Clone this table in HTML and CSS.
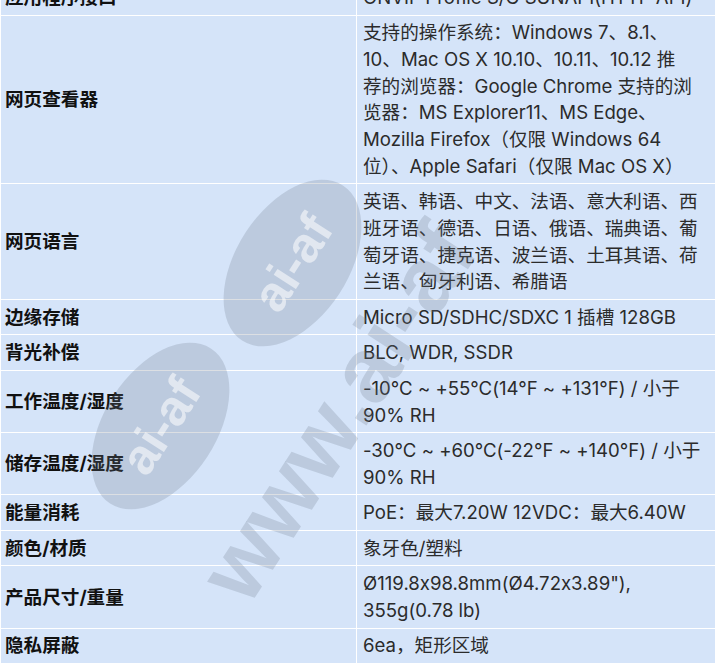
FILE: index.html
```html
<!DOCTYPE html>
<html lang="zh-CN">
<head>
    <meta charset="UTF-8">
    <meta name="viewport" content="width=device-width, initial-scale=1.0">
    <title>规格</title>
    <link rel="stylesheet" href="styles.css">
</head>
<body>
    <div class="page">
        <table class="spec-table">
            <tbody>
                <tr>
                    <th>应用程序接口</th>
                    <td>ONVIF Profile S/G SUNAPI(HTTP API)</td>
                </tr>
                <tr>
                    <th>网页查看器</th>
                    <td>支持的操作系统：Windows 7、8.1、<br>10、Mac OS X 10.10、10.11、10.12 推<br>荐的浏览器：Google Chrome 支持的浏<br>览器：MS Explorer11、MS Edge、<br>Mozilla Firefox（仅限 Windows 64<br>位）、Apple Safari（仅限 Mac OS X）</td>
                </tr>
                <tr>
                    <th>网页语言</th>
                    <td>英语、韩语、中文、法语、意大利语、西<br>班牙语、德语、日语、俄语、瑞典语、葡<br>萄牙语、捷克语、波兰语、土耳其语、荷<br>兰语、匈牙利语、希腊语</td>
                </tr>
                <tr>
                    <th>边缘存储</th>
                    <td>Micro SD/SDHC/SDXC 1 插槽 128GB</td>
                </tr>
                <tr>
                    <th>背光补偿</th>
                    <td>BLC, WDR, SSDR</td>
                </tr>
                <tr>
                    <th>工作温度/湿度</th>
                    <td>-10°C ~ +55°C(14°F ~ +131°F) / 小于<br>90% RH</td>
                </tr>
                <tr>
                    <th>储存温度/湿度</th>
                    <td>-30°C ~ +60°C(-22°F ~ +140°F) / 小于<br>90% RH</td>
                </tr>
                <tr>
                    <th>能量消耗</th>
                    <td>PoE：最大7.20W 12VDC：最大6.40W</td>
                </tr>
                <tr>
                    <th>颜色/材质</th>
                    <td>象牙色/塑料</td>
                </tr>
                <tr>
                    <th>产品尺寸/重量</th>
                    <td>Ø119.8x98.8mm(Ø4.72x3.89"),<br>355g(0.78 lb)</td>
                </tr>
                <tr>
                    <th>隐私屏蔽</th>
                    <td>6ea，矩形区域</td>
                </tr>
            </tbody>
        </table>

        <!-- watermark -->
        <div class="watermark">
            <div class="wm-badge wm-badge-top">ai-af</div>
            <div class="wm-badge wm-badge-left">ai-af</div>
            <div class="wm-text">www.ai-af</div>
        </div>
    </div>
</body>
</html>
```

FILE: styles.css
```css
* {
    margin: 0;
    padding: 0;
    box-sizing: border-box;
}

body {
    background: #ffffff;
    font-family: 'Inter', 'Noto Sans CJK SC', sans-serif;
    font-feature-settings: "calt" 0;
    overflow: hidden;
}

.page {
    position: relative;
    width: 715px;
    height: 663px;
    overflow: hidden;
}

.spec-table {
    width: 740px;
    margin-top: -21px;
    border-collapse: separate;
    border-spacing: 1px;
    background: #ffffff;
    font-size: 18.6px;
    line-height: 26.65px;
}

.spec-table th,
.spec-table td {
    background: #d5e4f9;
    padding: 3.95px 5px 3.95px 4px;
    vertical-align: middle;
    text-align: left;
    white-space: nowrap;
}

.spec-table th {
    width: 355px;
    color: #111;
    font-weight: bold;
}

.spec-table td {
    color: #2b2b2b;
    padding-left: 6px;
}

.watermark {
    position: absolute;
    inset: 0;
    pointer-events: none;
}

.wm-badge {
    position: absolute;
    width: 185px;
    height: 112px;
    border-radius: 50%;
    background: rgba(110, 120, 140, 0.24);
    color: rgba(255, 255, 255, 0.55);
    font-family: 'Liberation Sans', sans-serif;
    font-weight: bold;
    font-size: 50px;
    line-height: 112px;
    text-align: center;
    transform: rotate(-57deg);
}

.wm-badge-top {
    left: 200px;
    top: 207px;
}

.wm-badge-left {
    left: 68px;
    top: 370px;
}

.wm-text {
    position: absolute;
    left: 248px;
    top: 530px;
    color: rgba(110, 120, 140, 0.24);
    font-family: 'Liberation Sans', sans-serif;
    font-weight: bold;
    font-size: 92px;
    line-height: 92px;
    transform: rotate(-57deg);
    transform-origin: 0 78px;
    white-space: nowrap;
}
```
